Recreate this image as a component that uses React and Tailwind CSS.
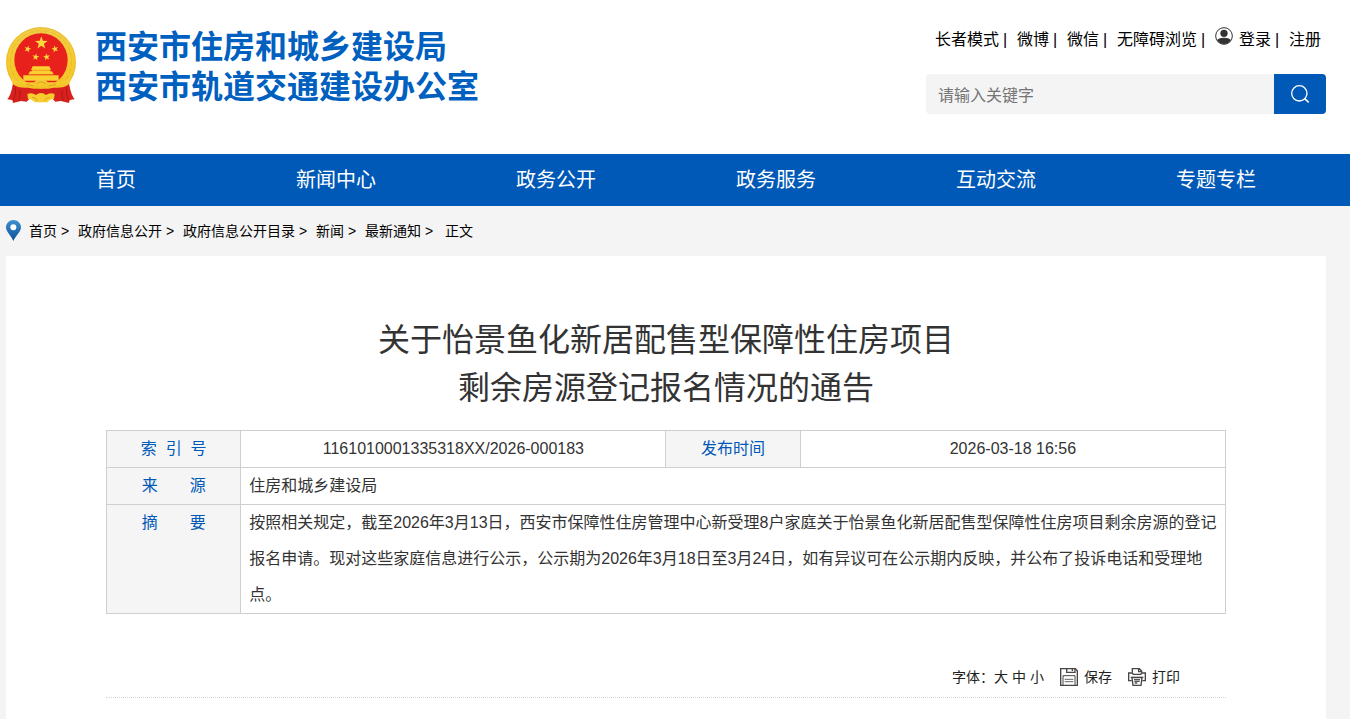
import { useState } from "react";

const topLinks = ["长者模式", "微博", "微信", "无障碍浏览", "登录", "注册"];

const navLinks = ["首页", "新闻中心", "政务公开", "政务服务", "互动交流", "专题专栏"];

const crumbs = ["首页", "政府信息公开", "政府信息公开目录", "新闻", "最新通知"];

const SUMMARY =
  "按照相关规定，截至2026年3月13日，西安市保障性住房管理中心新受理8户家庭关于怡景鱼化新居配售型保障性住房项目剩余房源的登记报名申请。现对这些家庭信息进行公示，公示期为2026年3月18日至3月24日，如有异议可在公示期内反映，并公布了投诉电话和受理地点。";

function Emblem() {
  return (
    <svg viewBox="18 35 210 228" className="h-[76px] w-[70px] shrink-0" aria-hidden="true">
      <defs>
        <linearGradient id="gold" x1="0" y1="0" x2="0" y2="1">
          <stop offset="0" stopColor="#f0cc45" />
          <stop offset="0.5" stopColor="#f5cb2e" />
          <stop offset="1" stopColor="#f2c024" />
        </linearGradient>
        <polygon
          id="star"
          points="0,-10 2.35,-3.24 9.51,-3.09 3.8,1.24 5.88,8.09 0,4 -5.88,8.09 -3.8,1.24 -9.51,-3.09 -2.35,-3.24"
        />
      </defs>
      {/* wheat ring */}
      <circle cx="123" cy="140" r="105" fill="url(#gold)" />
      <circle cx="123" cy="140" r="103" fill="none" stroke="#dca92b" strokeWidth="2" opacity="0.6" />
      <circle cx="123" cy="138" r="92" fill="none" stroke="#d9a022" strokeWidth="2" strokeDasharray="16 6" opacity="0.5" />
      <circle cx="123" cy="134" r="80" fill="#e8211d" />
      {/* stars */}
      <g fill="#fbd83c">
        <use href="#star" transform="translate(124 83) scale(2)" />
        <use href="#star" transform="translate(83 101) rotate(15) scale(1.1)" />
        <use href="#star" transform="translate(165 101) rotate(-15) scale(1.1)" />
        <use href="#star" transform="translate(107 125) rotate(10) scale(1.1)" />
        <use href="#star" transform="translate(140 125) rotate(-10) scale(1.1)" />
      </g>
      {/* gate */}
      <g fill="#fbcf2f">
        <path d="M98 153h50l5 11H93zM96 164h54v5H96zM90 168h66l5 9H85z" />
        <path d="M70 180h106v16H70z" />
      </g>
      <path d="M94 165h58M86 178h74" stroke="#e58a1b" strokeWidth="2" />
      {/* ribbons */}
      <path
        d="M40 198q18 12 40 12l43 10 43-10q22 0 40-12l3 16q4 23 15 38l-15 2-2 9-24-6-17 2-10-10H90l-10 10-17-2-24 6-2-9-15-2q11-15 15-38z"
        fill="#d8201c"
      />
      <path
        d="M46 216q4 20-6 40M60 224q2 18-4 32M200 216q-4 20 6 40M186 224q-2 18 4 32"
        stroke="#b01818"
        strokeWidth="3"
        fill="none"
      />
      <path
        d="M32 182q20 20 54 19h17q8-10 20-10t20 10h17q34 1 54-19l-6 24q-19 14-46 11l-17 3h-44l-17-3q-27 3-46-11z"
        fill="url(#gold)"
      />
      <path d="M82 236q14-5 26 3 7-6 15-6t15 6q12-8 26-3l-2 15q-14 1-20 10h-38q-6-9-20-10z" fill="#f7cc2f" />
      <path
        d="M108 206q15-13 30 0M78 207l22 5M168 207l-22 5M96 246q13 0 16 10M150 246q-13 0-16 10"
        fill="none"
        stroke="#dfa022"
        strokeWidth="3"
      />
    </svg>
  );
}

function UserIcon() {
  return (
    <svg viewBox="0 0 54 54" className="mr-1.5 mb-2 h-[18px] w-[18px]" aria-hidden="true">
      <circle cx="27" cy="27" r="25" fill="#fff" stroke="#333" strokeWidth="3" />
      <circle cx="27" cy="19" r="11" fill="#333" />
      <path d="M6 39c5-5 12-7 21-7s16 2 21 7c-5 8-12 12-21 12S11 47 6 39z" fill="#333" />
    </svg>
  );
}

function SearchIcon() {
  return (
    <svg viewBox="0 0 54 54" className="h-[18px] w-[18px]" fill="none" stroke="#fff" aria-hidden="true">
      <circle cx="25" cy="25" r="23" strokeWidth="4" />
      <path d="M41 41l12 11" strokeWidth="4.5" />
    </svg>
  );
}

function PinIcon() {
  return (
    <svg viewBox="0 0 45 63" className="mr-2 mb-0.5 h-[21px] w-[15px]" aria-hidden="true">
      <defs>
        <linearGradient id="pin" x1="0" y1="0" x2="0" y2="1">
          <stop offset="0" stopColor="#3f92d2" />
          <stop offset="1" stopColor="#0a4d96" />
        </linearGradient>
      </defs>
      <path d="M22 0C10 0 0 10 0 22c0 14 16 25 22 41 7-16 23-27 23-41C45 10 35 0 22 0z" fill="url(#pin)" />
      <circle cx="22" cy="22" r="9" fill="#fff" />
    </svg>
  );
}

function SaveIcon() {
  return (
    <svg viewBox="0 0 54 54" className="h-[18px] w-[18px]" fill="none" stroke="#4a4545" strokeWidth="4" aria-hidden="true">
      <path d="M2 2h44l6 6v44H2z" />
      <path d="M20 2v11h25V2M37 3v6" />
      <path d="M9 52V23h36v29" strokeWidth="3" />
      <path d="M14 34h26M14 41h26" stroke="#666" strokeWidth="3" />
    </svg>
  );
}

function PrintIcon() {
  return (
    <svg viewBox="0 0 54 54" className="h-[18px] w-[18px]" fill="none" stroke="#4a4545" strokeWidth="4" aria-hidden="true">
      <path d="M13 14V2h21l7 7v5M32 2v9h9" />
      <path d="M11 38H2V15h10l4 4h22l4-4h10v23h-9" />
      <path d="M8 28h38" />
      <path d="M12 29h30l-3 23H15z" fill="#fff" />
      <path d="M18 35h18M19 40h16M20 45h8" stroke="#555" />
    </svg>
  );
}

function Header() {
  const [keyword, setKeyword] = useState("");

  return (
    <header className="bg-white">
      <div className="flex h-[154px] items-start justify-between pr-6 pl-1.5">
        <a href="#" className="flex gap-[19px] pt-[27px]">
          <Emblem />
          <span className="text-[32px] leading-10 font-bold text-[#0060c0]">
            西安市住房和城乡建设局
            <br />
            西安市轨道交通建设办公室
          </span>
        </a>

        <div className="flex w-[400px] flex-col pt-7">
          <ul className="flex h-6 items-center justify-end pr-[5px] text-base leading-6">
            {topLinks.map((name, i) => (
              <li key={name} className="flex items-center whitespace-nowrap">
                {i > 0 && <span className="mr-2.5 ml-1 w-1 text-center">|</span>}
                {name === "登录" && <UserIcon />}
                <a href="#">{name}</a>
              </li>
            ))}
          </ul>

          <form
            className="mt-[22px] flex h-10 overflow-hidden rounded-sm"
            onSubmit={(e) => e.preventDefault()}
          >
            <input
              type="text"
              aria-label="请输入关键字"
              placeholder="请输入关键字"
              value={keyword}
              onChange={(e) => setKeyword(e.target.value)}
              className="min-w-0 flex-1 bg-[#f4f4f4] px-3 pt-1 text-base outline-none placeholder:text-[#757575]"
            />
            <button
              type="submit"
              aria-label="搜索"
              className="flex w-[52px] items-center justify-center bg-[#0059b7]"
            >
              <SearchIcon />
            </button>
          </form>
        </div>
      </div>

      <nav className="bg-[#0059b7] pr-6 pl-1.5">
        <ul className="grid grid-cols-6">
          {navLinks.map((name) => (
            <li key={name}>
              <a href="#" className="block text-center text-xl leading-[52px] text-white">
                {name}
              </a>
            </li>
          ))}
        </ul>
      </nav>
    </header>
  );
}

function Breadcrumb() {
  return (
    <div className="flex h-[50px] items-center text-sm">
      <PinIcon />
      {crumbs.map((name) => (
        <span key={name} className="flex">
          <a href="#">{name}</a>
          <span className="mr-2 ml-1 w-[9px]">&gt;</span>
        </span>
      ))}
      <span className="ml-[3px]">正文</span>
    </div>
  );
}

function InfoTable() {
  const label = "border border-[#cfcfcf] bg-[#f5f5f5] align-top font-normal text-[#0059b7]";
  const cell = "border border-[#cfcfcf] px-2 align-top";

  return (
    <table className="w-full table-fixed border-collapse text-base leading-9 text-[#333]">
      <colgroup>
        <col className="w-[12%]" />
        <col className="w-[38%]" />
        <col className="w-[12%]" />
        <col className="w-[38%]" />
      </colgroup>
      <tbody>
        <tr>
          <th className={label}>索&nbsp;&nbsp;引&nbsp;&nbsp;号</th>
          <td className={`${cell} text-center`}>1161010001335318XX/2026-000183</td>
          <th className={label}>发布时间</th>
          <td className={`${cell} text-center`}>2026-03-18 16:56</td>
        </tr>
        <tr>
          <th className={label}>来&emsp;&emsp;源</th>
          <td className={cell} colSpan={3}>
            住房和城乡建设局
          </td>
        </tr>
        <tr>
          <th className={label}>摘&emsp;&emsp;要</th>
          <td className={cell} colSpan={3}>
            {SUMMARY}
          </td>
        </tr>
      </tbody>
    </table>
  );
}

function Toolbar() {
  return (
    <div className="mt-[52px] flex h-8 items-start justify-end border-b border-dotted border-[#d5d5d5] pr-[46px] text-sm leading-[22px] text-[#222]">
      <div className="flex gap-1">
        <span className="-mr-1">字体：</span>
        <button type="button">大</button>
        <button type="button">中</button>
        <button type="button">小</button>
      </div>
      <button type="button" className="ml-4 flex items-center gap-1.5">
        <SaveIcon />
        保存
      </button>
      <button type="button" className="ml-4 flex items-center gap-1.5">
        <PrintIcon />
        打印
      </button>
    </div>
  );
}

function App() {
  return (
    <div className="flex min-h-screen flex-col bg-[#f4f4f4] font-['Liberation_Sans','Noto_Sans_CJK_SC',sans-serif] text-black">
      <Header />
      <main className="flex flex-1 flex-col pr-6 pl-1.5">
        <Breadcrumb />
        <article className="flex-1 bg-white px-[100px] pt-[60px]">
          <h1 className="mb-[18px] text-center text-[32px] leading-[48px] text-[#333]">
            关于怡景鱼化新居配售型保障性住房项目
            <br />
            剩余房源登记报名情况的通告
          </h1>
          <InfoTable />
          <Toolbar />
        </article>
      </main>
    </div>
  );
}

export default App;
